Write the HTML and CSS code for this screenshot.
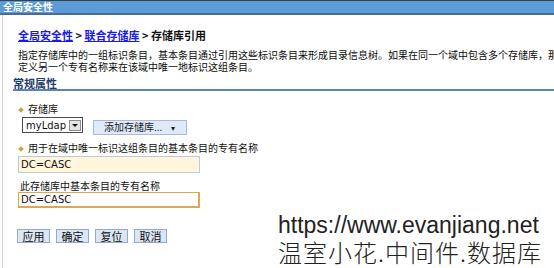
FILE: index.html
```html
<!doctype html>
<html>
<head>
	<meta charset="utf-8">
	<title>存储库引用</title>
	<link rel="stylesheet" href="styles.css">
</head>
<body>
	<div class="title-bar">全局安全性</div>

	<div class="content">
		<div class="breadcrumb">
			<a href="#">全局安全性</a> &gt; <a href="#">联合存储库</a> &gt; 存储库引用
		</div>

		<p class="desc">指定存储库中的一组标识条目，基本条目通过引用这些标识条目来形成目录信息树。如果在同一个域中包含多个存储库，那<br>定义另一个专有名称来在该域中唯一地标识这组条目。</p>

		<h2 class="section">常规属性</h2>

		<div class="field">
			<label class="label required">存储库</label>
			<div class="repo-row">
				<div class="select">
					<span class="select-value">myLdap</span>
					<span class="select-arrow"></span>
				</div>
				<button class="menu-btn" type="button">添加存储库... <span class="caret">▾</span></button>
			</div>
		</div>

		<div class="field">
			<label class="label required">用于在域中唯一标识这组条目的基本条目的专有名称</label>
			<div class="input input-required">DC=CASC</div>
		</div>

		<div class="field">
			<label class="label plain">此存储库中基本条目的专有名称</label>
			<div class="input input-focus">DC=CASC</div>
		</div>

		<div class="actions">
			<button type="button">应用</button>
			<button type="button">确定</button>
			<button type="button">复位</button>
			<button type="button">取消</button>
		</div>
	</div>

	<div class="watermark">
		<div class="wm-url">https://www.evanjiang.net</div>
		<div class="wm-name">温室小花.中间件.数据库</div>
	</div>
</body>
</html>
```

FILE: styles.css
```css
html, body {
	margin: 0;
	height: 100%;
	overflow: hidden;
	background: #fff;
}

body {
	position: relative;
	font-family: "Noto Sans CJK SC", "DejaVu Sans", sans-serif;
	color: #111;
}

.title-bar {
	height: 12px;
	line-height: 12px;
	padding-left: 3px;
	background: #5b9bd8;
	border-top: 1px solid #3a3f46;
	border-bottom: 2px solid #4b6b8f;
	color: #fff;
	font-size: 10px;
	font-weight: bold;
}

.content {
	box-sizing: border-box;
	height: calc(100% - 15px);
	margin-left: 2px;
	padding: 13px 0 0 15px;
	border-left: 1px solid #d4d4d4;
	overflow: hidden;
}

.breadcrumb {
	font-size: 11px;
	line-height: 14px;
	font-weight: bold;
	white-space: nowrap;
}

.breadcrumb a {
	color: #1a1ae6;
}

.desc {
	margin: 7px 0 0 0;
	font-size: 10px;
	line-height: 12px;
	white-space: nowrap;
	color: #0c0c0c;
}

.section {
	margin: 4px 0 0 -5px;
	font-size: 11px;
	line-height: 12px;
	color: #1e3e6c;
	border-bottom: 2px solid #5b84b3;
}

.field {
	margin-top: 7px;
}

.label {
	display: block;
	font-size: 10px;
	line-height: 12px;
	white-space: nowrap;
}

.required::before {
	content: "";
	display: inline-block;
	width: 4px;
	height: 4px;
	margin: 0 5px 1px 1px;
	background: #c9a24a;
	transform: rotate(45deg);
}

.plain {
	padding-left: 2px;
}

.repo-row {
	display: flex;
	align-items: flex-start;
	margin-top: 2px;
	padding-left: 4px;
}

.select {
	display: flex;
	align-items: center;
	justify-content: space-between;
	box-sizing: border-box;
	width: 61px;
	height: 16px;
	padding: 0 1px 0 3px;
	border: 1px solid #4a4a4a;
	font-family: "DejaVu Sans", sans-serif;
	font-size: 10px;
}

.select-arrow {
	position: relative;
	box-sizing: border-box;
	width: 12px;
	height: 11px;
	background: #e4e4e4;
	border: 1px solid #8c8c8c;
}

.select-arrow::after {
	content: "";
	position: absolute;
	left: 2px;
	top: 3px;
	border-left: 3px solid transparent;
	border-right: 3px solid transparent;
	border-top: 3px solid #111;
}

.menu-btn {
	box-sizing: border-box;
	width: 94px;
	height: 15px;
	margin: 3px 0 0 10px;
	padding: 0 0 0 10px;
	text-align: left;
	background: #dfe9f8;
	border: 1px solid #a8bcd8;
	font-family: "Noto Sans CJK SC", sans-serif;
	font-size: 10px;
	line-height: 12px;
	color: #222;
}

.menu-btn .caret {
	margin-left: 6px;
	font-size: 8px;
}

.input {
	box-sizing: border-box;
	width: 182px;
	height: 17px;
	padding-left: 2px;
	font-family: "DejaVu Sans", sans-serif;
	font-size: 10px;
	line-height: 15px;
}

.input-required {
	background: #fff6dc;
	border: 1px solid #b9c9de;
}

.field:nth-of-type(2) {
	margin-top: 12px;
}

.field:nth-of-type(3) .label {
	margin-bottom: 2px;
}

.input-focus {
	height: 16px;
	line-height: 13px;
	background: #fff;
	border: 2px solid #d9a957;
	border-width: 1px 2px 2px 1px;
}

.actions {
	display: flex;
	gap: 6px;
	margin: 21px 0 0 -1px;
}

.actions button {
	box-sizing: border-box;
	width: 33px;
	height: 14px;
	padding: 0;
	background: #dbe6f5;
	border: 1px solid #93aacb;
	font-family: "Noto Sans CJK SC", sans-serif;
	font-size: 11px;
	line-height: 11px;
	color: #111;
}

.watermark {
	position: absolute;
	left: 278px;
	top: 212px;
	color: #222;
}

.wm-url {
	font-family: "Liberation Sans", Arial, sans-serif;
	font-size: 23px;
	line-height: 27px;
}

.wm-name {
	font-family: "Noto Sans CJK SC", sans-serif;
	font-size: 24px;
	line-height: 25px;
	letter-spacing: 1px;
	font-weight: 300;
}
```
